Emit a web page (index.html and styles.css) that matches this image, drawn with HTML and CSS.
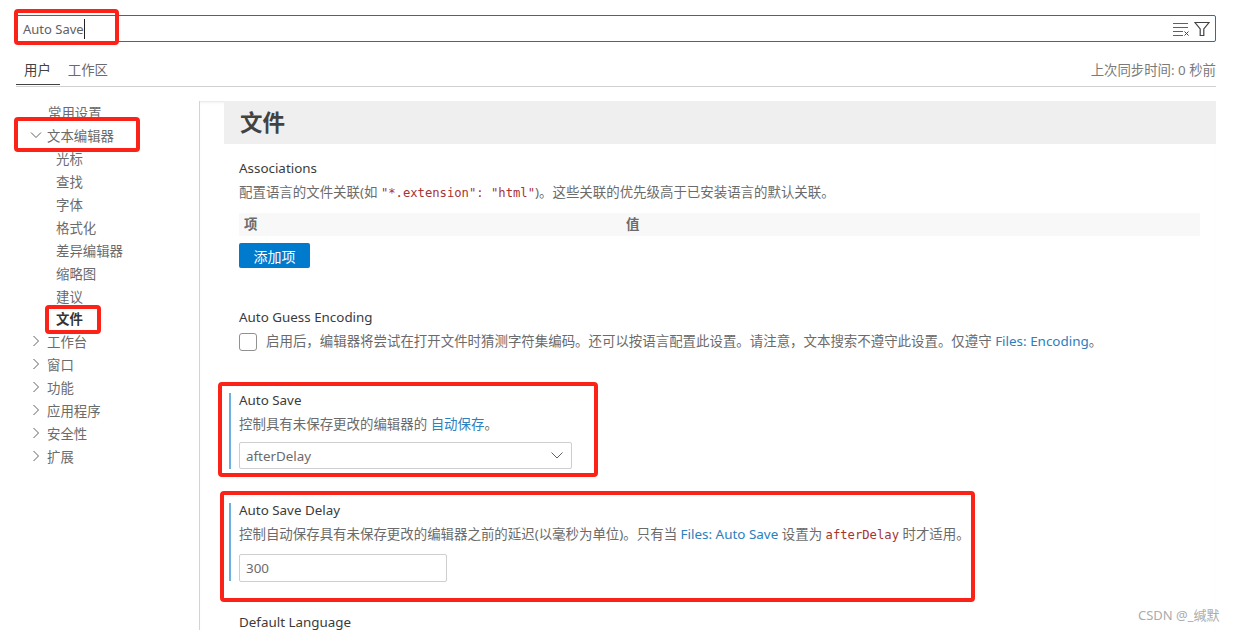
FILE: index.html

```html
<!DOCTYPE html>
<html lang="zh-CN">
<head>
  <meta charset="UTF-8" />
  <meta name="viewport" content="width=device-width, initial-scale=1.0"/>
  <title>设置</title>
  <link rel="stylesheet" href="styles.css">
</head>
<body>
  <div class="page">
    <div class="search">
      <span class="search-text">Auto Save</span><span class="caret"></span>
      <div class="search-icons">
        <svg width="16" height="14" viewBox="0 0 16 14" fill="none" stroke="#616161">
          <path d="M0 1.5h15M0 5.5h15M0 9.5h10M0 13.5h10"/>
          <path d="M11.5 9.5l4 4M15.5 9.5l-4 4" stroke="#424242"/>
        </svg>
        <svg width="16" height="16" viewBox="0 0 16 16" fill="none" stroke="#424242" stroke-width="1.2">
          <path d="M1 1.5h14L9.8 8v6.5H6.2V8z"/>
        </svg>
      </div>
    </div>

    <div class="tabs">
      <span class="tab active">用户</span>
      <span class="tab">工作区</span>
      <span class="sync">上次同步时间: 0 秒前</span>
    </div>

    <div class="columns">
      <nav class="tree">
        <div class="row top">常用设置</div>
        <div class="row group"><svg class="twist" viewBox="0 0 12 12"><path d="M1 3.5l5 5 5-5"/></svg>文本编辑器</div>
        <div class="row child">光标</div>
        <div class="row child">查找</div>
        <div class="row child">字体</div>
        <div class="row child">格式化</div>
        <div class="row child">差异编辑器</div>
        <div class="row child">缩略图</div>
        <div class="row child">建议</div>
        <div class="row child current">文件</div>
        <div class="row group"><svg class="twist" viewBox="0 0 12 12"><path d="M3.5 1l5 5-5 5"/></svg>工作台</div>
        <div class="row group"><svg class="twist" viewBox="0 0 12 12"><path d="M3.5 1l5 5-5 5"/></svg>窗口</div>
        <div class="row group"><svg class="twist" viewBox="0 0 12 12"><path d="M3.5 1l5 5-5 5"/></svg>功能</div>
        <div class="row group"><svg class="twist" viewBox="0 0 12 12"><path d="M3.5 1l5 5-5 5"/></svg>应用程序</div>
        <div class="row group"><svg class="twist" viewBox="0 0 12 12"><path d="M3.5 1l5 5-5 5"/></svg>安全性</div>
        <div class="row group"><svg class="twist" viewBox="0 0 12 12"><path d="M3.5 1l5 5-5 5"/></svg>扩展</div>
      </nav>

      <main class="content">
        <h2 class="section-title">文件</h2>

        <section class="setting assoc">
          <div class="label">Associations</div>
          <div class="desc">配置语言的文件关联(如 <code>"*.extension": "html"</code>)。这些关联的优先级高于已安装语言的默认关联。</div>
          <div class="table-head"><span class="col-key">项</span><span>值</span></div>
          <button class="add-btn">添加项</button>
        </section>

        <section class="setting guess">
          <div class="label">Auto Guess Encoding</div>
          <div class="check-row">
            <span class="checkbox"></span>
            <span class="desc">启用后，编辑器将尝试在打开文件时猜测字符集编码。还可以按语言配置此设置。请注意，文本搜索不遵守此设置。仅遵守 <a>Files: Encoding</a>。</span>
          </div>
        </section>

        <section class="setting modified save">
          <div class="label">Auto Save</div>
          <div class="desc">控制具有未保存更改的编辑器的 <a>自动保存</a>。</div>
          <div class="select">afterDelay
            <svg width="12" height="7" viewBox="0 0 12 7" fill="none" stroke="#616161"><path d="M.5.5L6 6 11.5.5"/></svg>
          </div>
        </section>

        <section class="setting modified delay">
          <div class="label">Auto Save Delay</div>
          <div class="desc">控制自动保存具有未保存更改的编辑器之前的延迟(以毫秒为单位)。只有当 <a>Files: Auto Save</a> 设置为 <code>afterDelay</code> 时才适用。</div>
          <div class="number">300</div>
        </section>

        <section class="setting">
          <div class="label">Default Language</div>
        </section>
      </main>
    </div>

    <div class="mark mark-search"></div>
    <div class="mark mark-editor"></div>
    <div class="mark mark-file"></div>
    <div class="mark mark-save"></div>
    <div class="mark mark-delay"></div>
    <div class="watermark">CSDN @_缄默</div>
  </div>
</body>
</html>
```

FILE: styles.css

```css
html, body {
  margin: 0;
  background: #fff;
}
.page {
  position: relative;
  width: 1234px;
  height: 630px;
  overflow: hidden;
  font-family: "Noto Sans", "Noto Sans CJK SC", sans-serif;
  font-size: 13px;
  color: #6b6b6b;
}

/* search */
.search {
  display: flex;
  align-items: center;
  box-sizing: border-box;
  width: 1200px;
  height: 27px;
  margin: 15px 0 0 16px;
  padding: 0 5px 0 6px;
  border: 1px solid #007acc;
  border-radius: 2px;
  font-size: 13px;
}
.search-text {
  color: #616161;
}
.caret {
  width: 1px;
  height: 20px;
  background: #222;
}
.search-icons {
  display: flex;
  align-items: center;
  gap: 5px;
  margin-left: auto;
}

/* tabs */
.tabs {
  display: flex;
  align-items: center;
  box-sizing: border-box;
  width: 1200px;
  height: 45px;
  margin-left: 16px;
  padding-top: 10px;
  border-bottom: 1px solid #d0d0d0;
}
.tab {
  display: flex;
  align-items: center;
  height: 32px;
  padding: 0 8px;
  font-size: 13.4px;
}
.tab.active {
  color: #424242;
  box-sizing: border-box;
  border-bottom: 1px solid #424242;
  padding-right: 9px;
}
.sync {
  margin-left: auto;
  font-size: 13.4px;
  color: #7a7a7a;
}

.columns {
  display: flex;
  height: 544px;
  margin-top: 14px;
}

/* tree */
.tree {
  box-sizing: border-box;
  flex: 0 0 200px;
  height: 530px;
  border-right: 1px solid #d4d4d4;
  overflow: hidden;
}
.row {
  display: flex;
  align-items: center;
  height: 22.9px;
  font-size: 13.4px;
  white-space: nowrap;
}
.row.top {
  padding-left: 48px;
}
.row.group {
  padding-left: 30px;
}
.row.child {
  padding-left: 56px;
}
.row.current {
  font-weight: 700;
  color: #333;
}
.twist {
  flex: none;
  width: 12px;
  height: 12px;
  margin-right: 5px;
  fill: none;
  stroke: #616161;
}

/* settings */
.content {
  flex: 1;
  box-sizing: border-box;
  min-width: 0;
  margin-right: 18px;
  padding-left: 24px;
  box-shadow: inset 0 3px 3px -2px #e2e2e2;
}
.section-title {
  height: 43px;
  margin: 0;
  padding-left: 16px;
  background: #efefef;
  font-size: 22.5px;
  font-weight: 700;
  line-height: 43px;
  color: #424242;
}
.setting {
  position: relative;
  box-sizing: border-box;
  padding-left: 15px;
}
.assoc {
  height: 166px;
  padding-top: 17px;
}
.guess {
  height: 83px;
}
.save {
  height: 110px;
}
.delay {
  height: 112px;
}
.label {
  height: 14px;
  font-size: 13.4px;
  line-height: 14px;
  color: #3b3b3b;
}
.desc {
  margin-top: 7px;
  font-size: 13.45px;
  line-height: 21px;
  white-space: nowrap;
}
code {
  font-family: "DejaVu Sans Mono", monospace;
  font-size: 12.2px;
  color: #a83232;
}
a {
  color: #2c80bd;
}
.table-head {
  display: flex;
  width: 961px;
  height: 23px;
  margin-top: 9px;
  background: #f8f8f8;
  font-size: 13.4px;
  font-weight: 700;
  line-height: 23px;
}
.col-key {
  width: 387px;
  padding-left: 5px;
  box-sizing: border-box;
}
.add-btn {
  display: block;
  width: 71px;
  height: 25px;
  margin-top: 7px;
  padding: 0;
  border: 0;
  border-radius: 2px;
  background: #007acc;
  color: #fff;
  font: inherit;
  font-size: 14px;
}
.check-row {
  display: flex;
  align-items: center;
  gap: 9px;
  margin-top: 7px;
}
.check-row .desc {
  margin-top: 0;
}
.checkbox {
  flex: none;
  box-sizing: border-box;
  width: 18px;
  height: 18px;
  border: 1px solid #919191;
  border-radius: 3px;
}
.modified::before {
  content: "";
  position: absolute;
  left: 5px;
  top: 0;
  width: 2px;
  height: 76px;
  background: #6cb1e1;
}
.delay::before {
  height: 78px;
}
.select,
.number {
  box-sizing: border-box;
  display: flex;
  align-items: center;
  padding-left: 6px;
  border: 1px solid #cecece;
  border-radius: 2px;
  font-size: 13.4px;
}
.select {
  justify-content: space-between;
  width: 333px;
  height: 27px;
  margin-top: 7px;
  padding-right: 8px;
}
.number {
  width: 208px;
  height: 28px;
  margin-top: 8px;
}

/* red annotations drawn over the screenshot */
.mark {
  position: absolute;
  box-sizing: border-box;
  border: 4px solid #fb2318;
  border-radius: 4px;
}
.mark-search {
  left: 14px;
  top: 9px;
  width: 105px;
  height: 36px;
}
.mark-editor {
  left: 14px;
  top: 117px;
  width: 126px;
  height: 35px;
}
.mark-file {
  left: 45px;
  top: 305px;
  width: 56px;
  height: 29px;
}
.mark-save {
  left: 218px;
  top: 382px;
  width: 380px;
  height: 95px;
}
.mark-delay {
  left: 220px;
  top: 491px;
  width: 755px;
  height: 111px;
}
.watermark {
  position: absolute;
  left: 1138px;
  top: 605px;
  font-size: 13px;
  color: #ababab;
  white-space: nowrap;
}
```
